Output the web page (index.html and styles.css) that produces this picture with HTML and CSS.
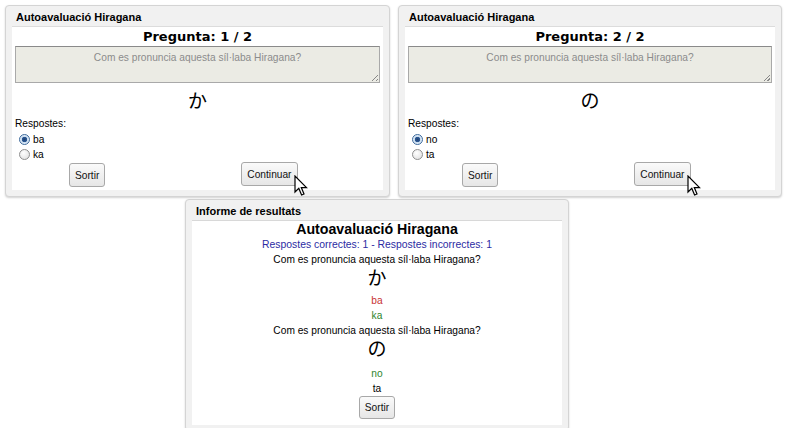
FILE: index.html
```html
<!DOCTYPE html>
<html lang="ca">
<head>
<meta charset="utf-8">
<title>Autoavaluació Hiragana</title>
<link rel="stylesheet" href="styles.css">
</head>
<body>
<div class="page">
  <div class="top-row">
    <section class="panel quiz">
      <h2 class="panel-title">Autoavaluació Hiragana</h2>
      <div class="panel-body">
        <div class="question-num">Pregunta: 1 / 2</div>
        <div class="question-box">Com es pronuncia aquesta síl·laba Hiragana?<span class="grip"></span></div>
        <div class="kana">か</div>
        <div class="answers-label">Respostes:</div>
        <div class="option"><span class="radio checked"></span>ba</div>
        <div class="option"><span class="radio"></span>ka</div>
        <div class="buttons">
          <button class="btn">Sortir</button>
          <span class="btn-wrap"><button class="btn">Continuar</button>
            <svg class="cursor" width="14" height="22" viewBox="0 0 14 22"><path d="M1 1 L1 17 L4.8 13.4 L7.6 20 L10 19 L7.3 12.6 L12.5 12.6 Z" fill="#fff" stroke="#000" stroke-width="1.2" stroke-linejoin="miter"/></svg>
          </span>
        </div>
      </div>
    </section>
    <section class="panel quiz">
      <h2 class="panel-title">Autoavaluació Hiragana</h2>
      <div class="panel-body">
        <div class="question-num">Pregunta: 2 / 2</div>
        <div class="question-box">Com es pronuncia aquesta síl·laba Hiragana?<span class="grip"></span></div>
        <div class="kana">の</div>
        <div class="answers-label">Respostes:</div>
        <div class="option"><span class="radio checked"></span>no</div>
        <div class="option"><span class="radio"></span>ta</div>
        <div class="buttons">
          <button class="btn">Sortir</button>
          <span class="btn-wrap"><button class="btn">Continuar</button>
            <svg class="cursor" width="14" height="22" viewBox="0 0 14 22"><path d="M1 1 L1 17 L4.8 13.4 L7.6 20 L10 19 L7.3 12.6 L12.5 12.6 Z" fill="#fff" stroke="#000" stroke-width="1.2" stroke-linejoin="miter"/></svg>
          </span>
        </div>
      </div>
    </section>
  </div>
  <section class="panel report">
    <h2 class="panel-title">Informe de resultats</h2>
    <div class="panel-body report-body">
      <div class="report-title">Autoavaluació Hiragana</div>
      <div class="score">Respostes correctes: 1 - Respostes incorrectes: 1</div>
      <div class="r-question">Com es pronuncia aquesta síl·laba Hiragana?</div>
      <div class="r-kana">か</div>
      <div class="r-answer wrong">ba</div>
      <div class="r-answer right">ka</div>
      <div class="r-question">Com es pronuncia aquesta síl·laba Hiragana?</div>
      <div class="r-kana k2">の</div>
      <div class="r-answer right">no</div>
      <div class="r-answer">ta</div>
      <button class="btn">Sortir</button>
    </div>
  </section>
</div>
</body>
</html>
```

FILE: styles.css
```css
html, body {
  margin: 0;
  padding: 0;
  background: #ffffff;
}
body {
  font-family: "Liberation Sans", Arial, "Noto Sans CJK JP", sans-serif;
  color: #000;
}
.page {
  padding: 5px 0 0 5px;
  width: 778px;
}
.top-row {
  display: flex;
  gap: 8px;
}
.panel {
  background: #f1f1f1;
  border: 1px solid #d4d4d4;
  border-radius: 4px;
  box-shadow: 0 1px 2px rgba(0,0,0,0.18);
  padding: 0 6px 6px 6px;
  box-sizing: border-box;
}
.quiz {
  width: 385px;
  height: 192px;
}
.quiz + .quiz {
  width: 384px;
}
.panel-title {
  margin: 0;
  font-size: 11px;
  font-weight: bold;
  height: 20px;
  line-height: 22px;
  padding-left: 4px;
}
.panel-body {
  background: #ffffff;
  border-top: 1px solid #dcdcdc;
  height: 164px;
  box-sizing: border-box;
  position: relative;
}
.question-num {
  font-family: "DejaVu Sans", Verdana, sans-serif;
  font-weight: bold;
  font-size: 13px;
  text-align: center;
  height: 19px;
  line-height: 20px;
}
.question-box {
  position: relative;
  margin: 0 3px;
  height: 35px;
  background: #ebebe4;
  border: 1px solid #a9a9a9;
  border-top-color: #8a8a8a;
  color: #8c8c8c;
  font-size: 10.2px;
  text-align: center;
  line-height: 22px;
}
.grip {
  position: absolute;
  right: 1px;
  bottom: 1px;
  width: 6px;
  height: 6px;
  background: linear-gradient(135deg, transparent 45%, #888 45%, #888 55%, transparent 55%, transparent 75%, #888 75%, #888 85%, transparent 85%);
}
.kana {
  font-family: "Noto Sans CJK JP", sans-serif;
  font-size: 19px;
  text-align: center;
  height: 30px;
  line-height: 34px;
}
.answers-label {
  font-size: 10.2px;
  padding-left: 3px;
  margin-top: 4px;
  height: 15px;
  line-height: 13px;
}
.option {
  display: flex;
  align-items: center;
  font-size: 10.2px;
  height: 15px;
  padding-left: 7px;
}
.radio {
  width: 9px;
  height: 9px;
  border-radius: 50%;
  border: 1px solid #8f8f8f;
  background: radial-gradient(circle at 40% 35%, #ffffff, #dcdcdc);
  margin-right: 3px;
  box-sizing: content-box;
}
.radio.checked {
  border-color: #3d6a9c;
  background: radial-gradient(circle at 50% 50%, #1f3f70 0, #2d5a96 2.5px, #c9dcef 3px, #eaf2fa 5px);
}
.buttons {
  display: flex;
  align-items: flex-start;
  padding-left: 57px;
  margin-top: 1px;
}
.btn {
  font-family: "Liberation Sans", Arial, sans-serif;
  font-size: 10.2px;
  color: #111;
  height: 24px;
  padding: 0 5px;
  border: 1px solid #a8a8a8;
  border-radius: 3px;
  background: linear-gradient(#fafafa, #e6e6e6);
  margin: 0;
}
.btn-wrap {
  position: relative;
  margin-left: 136px;
  margin-top: -1px;
  display: inline-block;
}
.cursor {
  position: absolute;
  left: 53px;
  top: 13px;
}
.report {
  width: 384px;
  margin: 2px 0 0 180px;
  height: 232px;
  padding-bottom: 0;
}
.report-body {
  height: auto;
  border-top-color: #d8d8d8;
  display: flex;
  flex-direction: column;
  align-items: center;
  padding-top: 1px;
  padding-bottom: 6px;
}
.report-title {
  font-weight: bold;
  font-size: 14.2px;
  height: 15px;
  line-height: 15px;
}
.score {
  color: #2b2ba3;
  font-size: 10.4px;
  height: 15px;
  line-height: 16px;
}
.r-question {
  font-size: 10.2px;
  height: 15px;
  line-height: 15px;
}
.r-kana {
  font-family: "Noto Sans CJK JP", sans-serif;
  font-size: 19px;
  height: 19px;
  line-height: 19px;
  margin-bottom: 7px;
}
.r-kana.k2 {
  margin-bottom: 9px;
}
.r-answer {
  font-size: 10.2px;
  height: 15px;
  line-height: 15px;
}
.wrong { color: #c83232; }
.right { color: #2e862e; }
.report-body .btn {
  margin-top: 0;
  height: 23px;
}
```
